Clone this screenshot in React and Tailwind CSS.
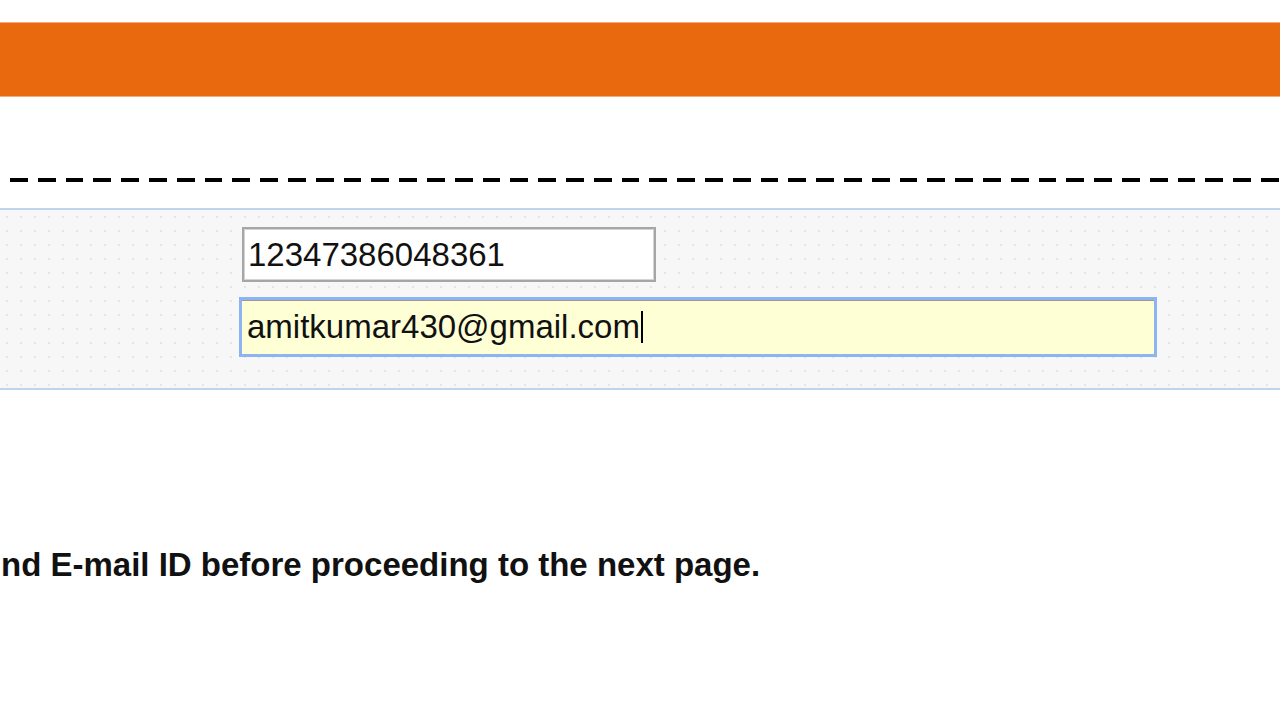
import React from "react";

function Field({ value, focused, width, caret }) {
  if (focused) {
    return (
      <div
        className="flex h-[60px] items-center border-[3px] border-[#8db3f2] bg-[#ffffd6] pl-[5px] shadow-[inset_0_1px_0_#9a9a9a]"
        style={{ width }}
      >
        <span className="leading-[38px] text-[#111]">{value}</span>
        {caret && <span className="ml-[1px] h-[32px] w-[2px] bg-black" />}
      </div>
    );
  }
  return (
    <div
      className="flex h-[55px] items-center border-2 border-[#a6a6a6] bg-white pl-[4px] shadow-[inset_0_0_0_1px_#d4d4d4]"
      style={{ width }}
    >
      <span className="leading-[38px] text-[#111]">{value}</span>
    </div>
  );
}

export default function App() {
  return (
    <div className="min-h-[720px] w-full overflow-hidden bg-white font-['Liberation_Sans',Arial,sans-serif] text-[33px]">
      <div className="h-[22px]" />
      <div className="h-[75px] border-y border-[#f3ab7c] bg-[#e9690f]" />

      <div className="h-[81px]" />
      <div className="h-[4px] bg-[repeating-linear-gradient(90deg,transparent_0_10px,#000_10px_27.8px)]" />
      <div className="h-[26px]" />

      <div className="flex flex-col gap-[15px] border-y-2 border-[#bcd4ec] bg-[#f7f7f7] bg-[radial-gradient(#e4e4e4_1px,transparent_1.2px)] bg-[length:14px_14px] pb-[31px] pt-[17px]">
        <div className="pl-[242px]">
          <Field value="12347386048361" width={414} />
        </div>
        <div className="pl-[239px]">
          <Field value="amitkumar430@gmail.com" width={918} focused caret />
        </div>
      </div>

      <p className="mt-[156px] whitespace-nowrap pl-[1px] font-bold leading-[38px] text-[#111]">
        nd E-mail ID before proceeding to the next page.
      </p>
    </div>
  );
}
